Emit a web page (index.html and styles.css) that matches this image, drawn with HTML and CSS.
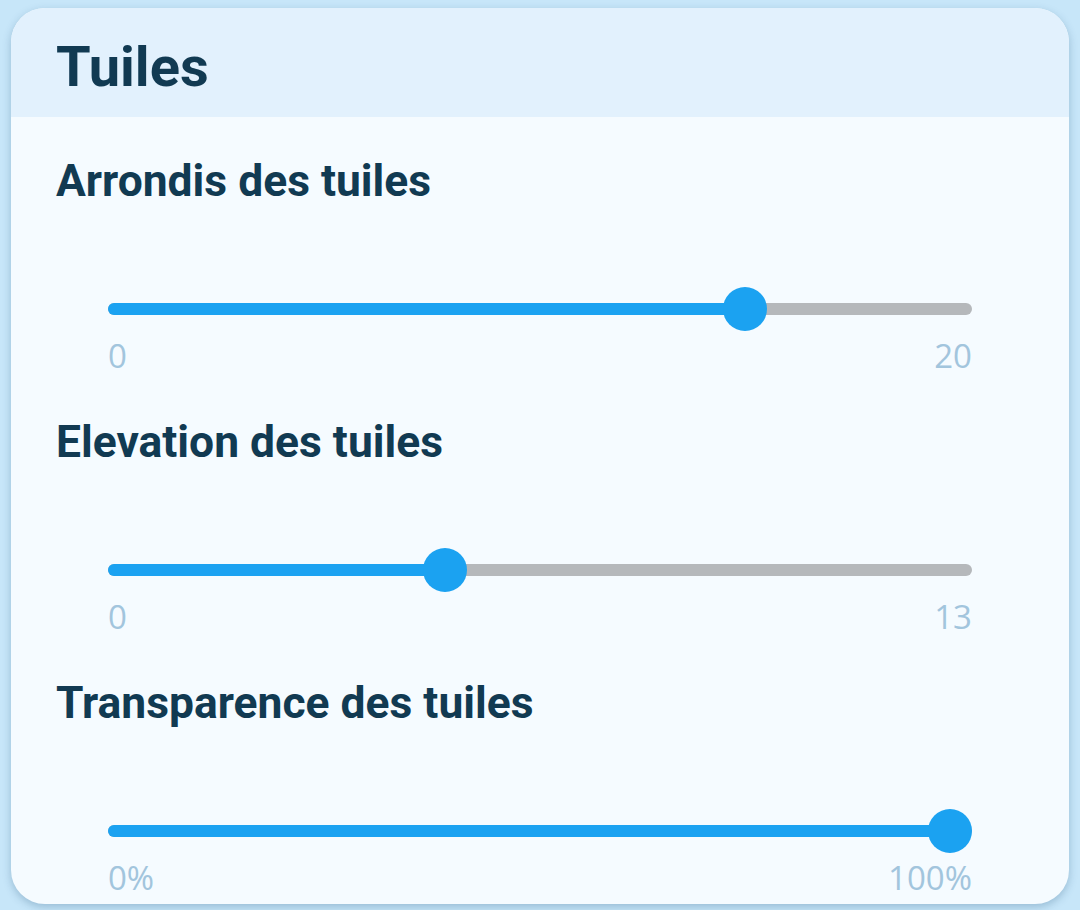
FILE: index.html
```html
<!DOCTYPE html>
<html lang="fr">
<head>
<meta charset="utf-8">
<title>Tuiles</title>
<link rel="stylesheet" href="styles.css">
</head>
<body>
  <div class="card">
    <div class="card-header">
      <h1 class="title">Tuiles</h1>
    </div>
    <div class="card-body">
      <section class="setting">
        <h2 class="setting-title">Arrondis des tuiles</h2>
        <div class="slider">
          <div class="track"></div>
          <div class="fill" style="width: 637px"></div>
          <div class="thumb" style="left: 615px"></div>
        </div>
        <div class="range-labels"><span>0</span><span>20</span></div>
      </section>
      <section class="setting">
        <h2 class="setting-title">Elevation des tuiles</h2>
        <div class="slider">
          <div class="track"></div>
          <div class="fill" style="width: 337px"></div>
          <div class="thumb" style="left: 315px"></div>
        </div>
        <div class="range-labels"><span>0</span><span>13</span></div>
      </section>
      <section class="setting">
        <h2 class="setting-title">Transparence des tuiles</h2>
        <div class="slider">
          <div class="track"></div>
          <div class="fill" style="width: 842px"></div>
          <div class="thumb" style="left: 820px"></div>
        </div>
        <div class="range-labels"><span>0%</span><span>100%</span></div>
      </section>
    </div>
  </div>
</body>
</html>
```

FILE: styles.css
```css
* {
  box-sizing: border-box;
}

html, body {
  margin: 0;
  padding: 0;
}

body {
  background: #c7e6f9;
  padding: 8px 11px 6px;
  font-family: Roboto, "Liberation Sans", sans-serif;
}

.card {
  width: 1058px;
  height: 896px;
  border-radius: 34px;
  overflow: hidden;
  background: #f5fbff;
  box-shadow: 0 3px 8px rgba(30, 80, 120, 0.28);
}

.card-header {
  background: #e2f1fd;
  height: 109px;
  padding: 10px 45px 0;
}

.title {
  margin: 0;
  font-size: 56px;
  line-height: 99px;
  font-weight: 700;
  color: #113a52;
}

.card-body {
  padding: 38px 45px 0;
}

.setting {
  margin-bottom: 38px;
}

.setting-title {
  margin: 0;
  font-size: 44.4px;
  line-height: 52px;
  font-weight: 700;
  color: #113a52;
}

.slider {
  position: relative;
  height: 44px;
  margin: 80px 52px 0;
}

.track,
.fill {
  position: absolute;
  left: 0;
  top: 16px;
  height: 12px;
  border-radius: 6px;
}

.track {
  right: 0;
  background: #b5b8bb;
}

.fill {
  background: #1ba2f1;
}

.thumb {
  position: absolute;
  top: 0;
  width: 44px;
  height: 44px;
  border-radius: 50%;
  background: #1ba2f1;
}

.range-labels {
  display: flex;
  justify-content: space-between;
  margin: 3px 52px 0;
  font-family: "Open Sans", "Noto Sans", sans-serif;
  font-size: 33px;
  line-height: 44px;
  color: #a2c5dd;
}
```
